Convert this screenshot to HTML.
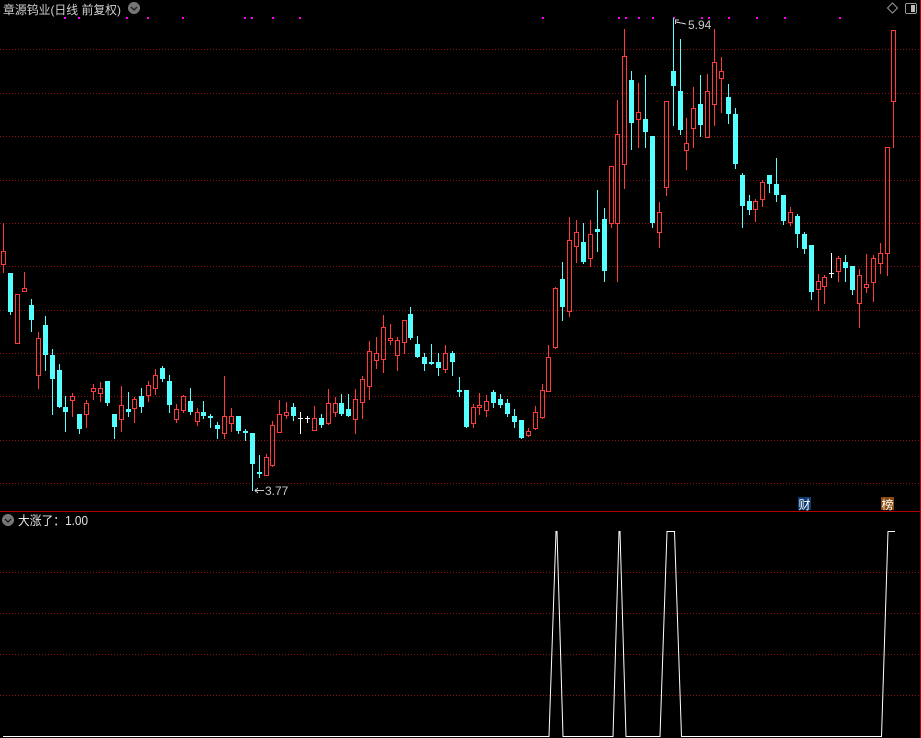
<!DOCTYPE html>
<html><head><meta charset="utf-8"><style>
html,body{margin:0;padding:0;background:#000;width:921px;height:738px;overflow:hidden}
svg{display:block}
text{font-family:"Liberation Sans","Noto Sans CJK SC",sans-serif}
</style></head><body>
<svg id="s" width="921" height="738" viewBox="0 0 921 738" xmlns="http://www.w3.org/2000/svg" shape-rendering="crispEdges">
<rect width="921" height="738" fill="#000"/>
<g id="grid" stroke="#8a1010" stroke-width="1" stroke-dasharray="1 2"></g>
<line x1="0" y1="511.5" x2="921" y2="511.5" stroke="#b00000"/>
<line x1="920.5" y1="0" x2="920.5" y2="738" stroke="#c00000"/>
<g id="dots" fill="#ff00ff"></g>
<g id="c"></g>
<text x="3" y="14" font-size="12" fill="#d0d0d0" textLength="118" lengthAdjust="spacingAndGlyphs" font-family="Noto Sans CJK SC, sans-serif">章源钨业(日线 前复权)</text>
<circle cx="134" cy="8" r="6" fill="#777"/>
<path d="M131 7 L134 10 L137 7" stroke="#222" stroke-width="1.5" fill="none" shape-rendering="auto"/>
<path d="M892.5 3 L897.5 8 L892.5 13 L887.5 8 Z" stroke="#999" fill="none" shape-rendering="auto"/>
<rect x="905.5" y="3.5" width="11" height="10" rx="1.5" stroke="#999" fill="none"/>
<rect x="911" y="5" width="4" height="7" fill="#bbb"/>
<path d="M675.5 20 L675.5 24 M675 20 L679 20 M676 22 L686 24" stroke="#c8c8c8" fill="none"/>
<text x="688" y="29" font-size="12" fill="#c8c8c8">5.94</text>
<path d="M254.5 490.5 L264 490.5 M255 490.5 L258 488 M255 490.5 L258 493" stroke="#c8c8c8" fill="none"/>
<text x="265" y="495" font-size="12" fill="#c8c8c8">3.77</text>
<rect x="798" y="497" width="13" height="13" fill="#0d3a70"/>
<text x="798.5" y="509" font-size="12" fill="#fff" font-family="Noto Sans CJK SC, sans-serif">财</text>
<rect x="881" y="497" width="13" height="13" fill="#8a4a12"/>
<text x="881.5" y="509" font-size="12" fill="#fff" font-family="Noto Sans CJK SC, sans-serif">榜</text>
<circle cx="8" cy="520" r="6" fill="#777"/>
<path d="M5 519 L8 522 L11 519" stroke="#222" stroke-width="1.5" fill="none" shape-rendering="auto"/>
<text x="18" y="525" font-size="12.5" fill="#e6e6e6" textLength="70" lengthAdjust="spacingAndGlyphs" font-family="Noto Sans CJK SC, sans-serif">大涨了：1.00</text>
<polyline fill="none" stroke="#fff" stroke-width="1" shape-rendering="auto" points="3,736.5 549,736.5 556,531.5 557,531.5 563,736.5 613,736.5 619,531.5 620,531.5 626,736.5 660,736.5 667,531.5 674.5,531.5 681.5,736.5 881.5,736.5 888,531.5 895,531.5"/>
</svg>
<script>
var NS="http://www.w3.org/2000/svg",s=document.getElementById('s');
function el(p,t,a){var e=document.createElementNS(NS,t);for(var k in a)e.setAttribute(k,a[k]);p.appendChild(e);return e;}
var g=document.getElementById('grid');
[49,93,136,180,223,266,310,353,396,440,483,572,613,654,695].forEach(function(y){el(g,'line',{x1:0,x2:920,y1:y+.5,y2:y+.5});});
var d=document.getElementById('dots');
[65,79,127,148,183,245,252,273,300,543,619,626,639,653,674,702,709,729,757,785,840].forEach(function(x){el(d,'rect',{x:x-1,y:17,width:2,height:2});});
var D="R 223 272 251 264|C 273 314 273 312|R 294 343 294 343|R 272 291 288 291|C 299 331 305 320|R 332 388 338 375|C 316 370 325 355|C 349 414 355 379|C 364 407 370 407|C 396 431 407 412|R 393 416 396 400|C 414 433 414 429|R 400 427 403 414|R 384 399 388 391|R 382 401 388 393|C 381 405 381 403|C 414 438 414 427|R 386 431 405 419|C 392 416 409 412|R 397 422 399 408|C 388 412 396 407|R 381 401 385 395|R 369 394 375 388|C 366 381 368 379|C 375 412 381 405|R 404 422 409 419|R 395 412 396 410|C 388 414 401 412|R 408 425 412 421|C 401 418 412 416|C 414 427 416 418|C 422 438 425 429|R 376 438 416 433|R 408 431 416 423|C 416 433 416 431|C 429 440 431 433|C 433 490 433 464|C 455 477 472 474|R 454 475 457 475|R 421 466 425 465|R 400 432 414 432|R 402 418 412 415|C 403 420 407 416|W 412 433 418 418|W 416 422 418 418|R 406 430 418 430|C 414 427 418 425|R 389 424 403 423|R 397 416 403 412|C 394 415 403 414|C 394 416 409 416|R 389 433 399 419|R 376 418 379 402|R 341 399 351 386|R 337 368 353 360|R 315 372 327 359|R 324 344 338 340|R 337 370 340 355|R 320 353 320 342|C 307 339 314 338|C 336 357 344 357|C 353 370 357 364|C 344 364 362 364|C 353 375 362 368|R 345 372 353 369|C 351 375 353 362|C 377 396 390 392|C 390 427 390 427|R 404 427 407 423|R 393 414 405 407|R 395 416 401 410|C 390 407 392 403|C 394 407 399 405|C 399 416 403 414|C 409 427 416 422|C 420 438 420 438|R 428 436 431 435|R 406 429 412 428|R 384 418 390 417|R 345 391 357 391|R 287 348 288 347|C 262 320 279 307|R 217 316 240 311|R 220 262 232 246|C 223 263 242 262|R 220 266 234 258|C 190 251 229 232|C 208 281 219 271|R 166 227 166 223|R 100 281 134 223|R 29 188 56 164|C 71 149 80 123|R 83 147 112 119|C 75 147 119 132|C 136 227 136 223|R 202 247 212 232|R 101 195 101 187|C 18 125 71 86|C 39 134 91 130|R 118 169 143 150|R 87 147 108 128|C 75 136 104 125|R 74 137 91 137|R 29 125 62 104|R 57 112 71 78|C 84 123 97 114|C 108 168 114 164|C 173 227 175 206|C 195 214 201 210|R 199 221 201 209|R 180 206 182 199|C 175 192 175 184|C 158 201 184 195|C 195 224 195 221|R 207 225 212 222|C 214 247 216 234|C 232 253 234 249|C 245 299 245 292|R 274 310 281 289|R 275 303 277 286|W 253 277 273 273|R 256 281 258 271|C 255 281 262 268|C 266 294 266 290|R 269 327 275 303|R 254 292 284 287|R 255 301 258 282|R 243 273 253 263|R 147 275 147 253|R 30 147 30 101".split('|');
var c=document.getElementById('c');
D.forEach(function(r,i){var p=r.split(' '),t=p[0],wt=+p[1],wb=+p[2],bt=+p[3],bb=+p[4];
var x=Math.round(3.3+6.9*i);
if(t=='R'){var col='#ff3a3a';
 if(wt<bt)el(c,'line',{x1:x+.5,x2:x+.5,y1:wt,y2:bt,stroke:col});
 if(wb>bb)el(c,'line',{x1:x+.5,x2:x+.5,y1:bb,y2:wb+1,stroke:col});
 el(c,'rect',{x:x-1.5,y:bt+.5,width:4,height:Math.max(1,bb-bt),fill:'none',stroke:col});
}else if(t=='C'){var col='#54ffff';
 el(c,'line',{x1:x+.5,x2:x+.5,y1:wt,y2:wb+1,stroke:col});
 el(c,'rect',{x:x-2,y:bt,width:5,height:Math.max(2,bb-bt),fill:col});
}else{var col='#ffffff';
 el(c,'line',{x1:x+.5,x2:x+.5,y1:wt,y2:wb+1,stroke:col});
 el(c,'line',{x1:x-2,x2:x+3,y1:bt+.5,y2:bt+.5,stroke:col});
}});
</script>
</body></html>
